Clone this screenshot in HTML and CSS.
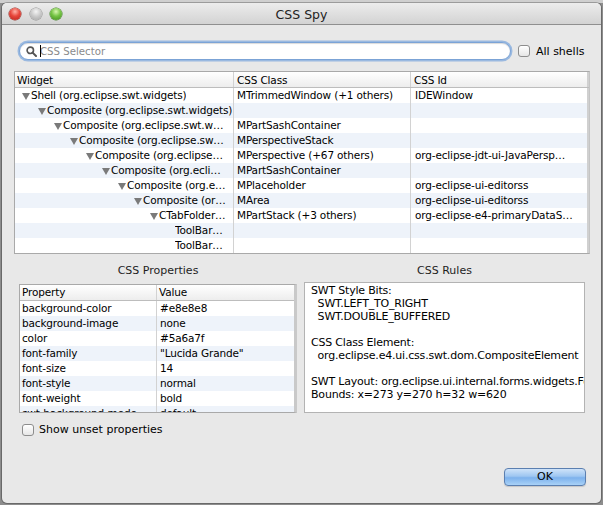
FILE: index.html
```html
<!DOCTYPE html>
<html>
<head>
<meta charset="utf-8">
<title>CSS Spy</title>
<link rel="stylesheet" href="styles.css">
</head>
<body>
<div class="window">
  <div class="titlebar">
    <div class="lights">
      <span class="light red"></span>
      <span class="light gray"></span>
      <span class="light green"></span>
    </div>
    <div class="title">CSS Spy</div>
    <div></div>
  </div>
  <div class="content">
    <div class="search-row">
      <div class="search">
        <svg class="mag" width="11" height="11" viewBox="0 0 11 11">
          <circle cx="4.3" cy="4.3" r="3.2" fill="none" stroke="#555" stroke-width="1.6"/>
          <path d="M6.6 6.6 L10 10" stroke="#555" stroke-width="2" stroke-linecap="round"/>
        </svg>
        <span class="caret"></span>
        <span class="placeholder">CSS Selector</span>
      </div>
      <div class="check"><span class="box"></span><span>All shells</span></div>
    </div>

    <div class="tree">
      <div class="thead">
        <div class="th">Widget</div>
        <div class="th">CSS Class</div>
        <div class="th last">CSS Id</div>
      </div>
      <div class="row">
        <div class="cell tcell l0"><span class="tri"></span><span class="txt">Shell (org.eclipse.swt.widgets)</span></div>
        <div class="cell">MTrimmedWindow (+1 others)</div>
        <div class="cell">IDEWindow</div>
      </div>
      <div class="row alt">
        <div class="cell tcell l1"><span class="tri"></span><span class="txt">Composite (org.eclipse.swt.widgets)</span></div>
        <div class="cell"></div>
        <div class="cell"></div>
      </div>
      <div class="row">
        <div class="cell tcell l2"><span class="tri"></span><span class="txt">Composite (org.eclipse.swt.w…</span></div>
        <div class="cell">MPartSashContainer</div>
        <div class="cell"></div>
      </div>
      <div class="row alt">
        <div class="cell tcell l3"><span class="tri"></span><span class="txt">Composite (org.eclipse.sw…</span></div>
        <div class="cell">MPerspectiveStack</div>
        <div class="cell"></div>
      </div>
      <div class="row">
        <div class="cell tcell l4"><span class="tri"></span><span class="txt">Composite (org.eclipse…</span></div>
        <div class="cell">MPerspective (+67 others)</div>
        <div class="cell">org-eclipse-jdt-ui-JavaPersp…</div>
      </div>
      <div class="row alt">
        <div class="cell tcell l5"><span class="tri"></span><span class="txt">Composite (org.ecli…</span></div>
        <div class="cell">MPartSashContainer</div>
        <div class="cell"></div>
      </div>
      <div class="row">
        <div class="cell tcell l6"><span class="tri"></span><span class="txt">Composite (org.e…</span></div>
        <div class="cell">MPlaceholder</div>
        <div class="cell">org-eclipse-ui-editorss</div>
      </div>
      <div class="row alt">
        <div class="cell tcell l7"><span class="tri"></span><span class="txt">Composite (or…</span></div>
        <div class="cell">MArea</div>
        <div class="cell">org-eclipse-ui-editorss</div>
      </div>
      <div class="row">
        <div class="cell tcell l8"><span class="tri"></span><span class="txt">CTabFolder…</span></div>
        <div class="cell">MPartStack (+3 others)</div>
        <div class="cell">org-eclipse-e4-primaryDataS…</div>
      </div>
      <div class="row alt">
        <div class="cell tcell l9"><span class="tri none"></span><span class="txt">ToolBar…</span></div>
        <div class="cell"></div>
        <div class="cell"></div>
      </div>
      <div class="row">
        <div class="cell tcell l9"><span class="tri none"></span><span class="txt">ToolBar…</span></div>
        <div class="cell"></div>
        <div class="cell"></div>
      </div>
    </div>

    <div class="lower">
      <div class="label">CSS Properties</div>
      <div class="label">CSS Rules</div>
      <div class="props">
        <div class="phead">
          <div class="th">Property</div>
          <div class="th last">Value</div>
        </div>
        <div class="prow"><div class="pc">background-color</div><div class="pc">#e8e8e8</div></div>
        <div class="prow alt"><div class="pc">background-image</div><div class="pc">none</div></div>
        <div class="prow"><div class="pc">color</div><div class="pc">#5a6a7f</div></div>
        <div class="prow alt"><div class="pc">font-family</div><div class="pc">"Lucida Grande"</div></div>
        <div class="prow"><div class="pc">font-size</div><div class="pc">14</div></div>
        <div class="prow alt"><div class="pc">font-style</div><div class="pc">normal</div></div>
        <div class="prow"><div class="pc">font-weight</div><div class="pc">bold</div></div>
        <div class="prow alt"><div class="pc">swt-background-mode</div><div class="pc">default</div></div>
      </div>
      <div class="rules"><pre class="rules-text">SWT Style Bits:
  SWT.LEFT_TO_RIGHT
  SWT.DOUBLE_BUFFERED

CSS Class Element:
  org.eclipse.e4.ui.css.swt.dom.CompositeElement

SWT Layout: org.eclipse.ui.internal.forms.widgets.FormLayout
Bounds: x=273 y=270 h=32 w=620</pre></div>
    </div>

    <div class="check unset"><span class="box"></span><span>Show unset properties</span></div>

    <div class="footer">
      <button class="ok">OK</button>
    </div>
  </div>
</div>
</body>
</html>
```
FILE: styles.css
```css
* { box-sizing: border-box; }

html, body {
  margin: 0;
  padding: 0;
}

body {
  width: 603px;
  height: 505px;
  overflow: hidden;
  background: linear-gradient(#cfcfcf 0, #cfcfcf 3px, #8d8d8d 3px);
  font-family: "DejaVu Sans", sans-serif;
  font-size: 11px;
  color: #000;
}

.window {
  margin: 3px 0 0 2px;
  width: 599px;
  height: 500px;
  background: #e8e8e8;
  border-radius: 5px;
  overflow: hidden;
  display: flex;
  flex-direction: column;
  box-shadow: 0 0 0 1px rgba(0,0,0,0.25);
}

/* title bar */
.titlebar {
  height: 22px;
  flex: none;
  display: grid;
  grid-template-columns: 1fr auto 1fr;
  align-items: center;
  background: linear-gradient(#ececec, #d3d3d3);
  border-bottom: 1px solid #8f8f8f;
}

.lights {
  display: flex;
  gap: 8.5px;
  padding-left: 7px;
}

.light {
  width: 12px;
  height: 12px;
  border-radius: 50%;
  display: block;
}

.light.red {
  background: radial-gradient(circle at 50% 30%, #ffb3a8 0, #e8473c 45%, #b8211a 100%);
  box-shadow: 0 0 0 0.5px #8d2a24;
}

.light.gray {
  background: radial-gradient(circle at 50% 30%, #f4f4f4 0, #c8c8c8 50%, #a5a5a5 100%);
  box-shadow: 0 0 0 0.5px #8a8a8a;
}

.light.green {
  background: radial-gradient(circle at 50% 30%, #d8f7b0 0, #74c343 45%, #3f8a1c 100%);
  box-shadow: 0 0 0 0.5px #3f7d25;
}

.title {
  font-size: 12.5px;
  color: #222;
  padding-top: 1px;
}

/* content */
.content {
  flex: 1;
  display: flex;
  flex-direction: column;
  padding: 16px 12px 17px 12px;
}

.search-row {
  height: 20px;
  display: flex;
  align-items: center;
}

.search {
  margin-left: 5px;
  width: 492px;
  height: 18px;
  background: #fff;
  border: 1px solid #7ba3d6;
  border-radius: 9px;
  box-shadow: 0 0 0 1.5px rgba(128, 170, 222, 0.75), inset 0 1px 1px rgba(0,0,0,0.15);
  display: flex;
  align-items: center;
  padding-left: 6px;
}

.mag {
  flex: none;
  margin-right: 3px;
}

.caret {
  width: 1px;
  height: 12px;
  background: #000;
  margin-right: -1px;
  position: relative;
  z-index: 1;
}

.placeholder {
  color: #8a8a8a;
  font-size: 10.2px;
}

.check {
  display: flex;
  align-items: center;
  gap: 6px;
  margin-left: 7px;
}

.box {
  width: 12px;
  height: 12px;
  border: 1px solid #8d8d8d;
  border-radius: 3px;
  background: linear-gradient(#ffffff, #e6e6e6);
  box-shadow: inset 0 1px 1px rgba(255,255,255,0.8);
  flex: none;
}

/* tree table */
.tree {
  margin-top: 10px;
  width: 576px;
  background: #fff;
  border: 1px solid #a9a9a9;
  border-right-color: #c4c4c4;
  font-size: 10.5px;
  letter-spacing: -0.15px;
}

.thead, .row {
  display: grid;
  grid-template-columns: 219px 177px 1fr;
}

.thead {
  height: 16px;
  background: linear-gradient(#ffffff, #ededed);
  border-bottom: 1px solid #bdbdbd;
}

.th {
  line-height: 16px;
  padding-left: 2px;
  border-right: 1px solid #d2d2d2;
  white-space: nowrap;
  overflow: hidden;
}

.thead .th + .th { padding-left: 3px; }

.th.last { border-right: 2px solid #d0d0d0; }

.row {
  height: 15px;
  background: #fff;
}

.row.alt { background: #eef3fa; }

.cell {
  line-height: 15px;
  padding-left: 3px;
  border-right: 1px solid #d2d2d2;
  white-space: nowrap;
  overflow: hidden;
  text-overflow: ellipsis;
}

.cell:last-child { padding-left: 4px; border-right: 2px solid #d0d0d0; }

.tcell {
  display: flex;
  align-items: center;
  padding-left: 7px;
}

.l1 { padding-left: 23px; }
.l2 { padding-left: 39px; }
.l3 { padding-left: 55px; }
.l4 { padding-left: 71px; }
.l5 { padding-left: 87px; }
.l6 { padding-left: 103px; }
.l7 { padding-left: 119px; }
.l8 { padding-left: 135px; }
.l9 { padding-left: 151px; }

.tri {
  flex: none;
  width: 0;
  height: 0;
  border-left: 4.5px solid transparent;
  border-right: 4.5px solid transparent;
  border-top: 7px solid #7a7a7a;
  margin-right: 1px;
  margin-top: 1px;
}

.tri.none { border-top-color: transparent; }

.txt {
  overflow: hidden;
  text-overflow: ellipsis;
  white-space: nowrap;
}

/* lower section */
.lower {
  display: grid;
  grid-template-columns: 278px 281px;
  column-gap: 7px;
  margin-left: 5px;
  align-items: start;
}

.label {
  text-align: center;
  line-height: 13px;
  margin-top: 10px;
  color: #1e1e1e;
}

.props {
  margin-top: 7px;
  height: 129px;
  background: #fff;
  border: 1px solid #a9a9a9;
  border-right: 3px solid #c9c9c9;
  overflow: hidden;
  font-size: 10.5px;
  letter-spacing: -0.15px;
}

.phead, .prow {
  display: grid;
  grid-template-columns: 137px 1fr;
}

.phead {
  height: 16px;
  background: linear-gradient(#ffffff, #ededed);
  border-bottom: 1px solid #bdbdbd;
}

.phead .th { line-height: 15px; padding-left: 2px; }
.phead .th.last { border-right: none; }

.prow {
  height: 15px;
  background: #fff;
}

.prow.alt { background: #eef3fa; }

.pc {
  line-height: 15px;
  padding-left: 2px;
  white-space: nowrap;
  overflow: hidden;
  border-right: 1px solid #d2d2d2;
}

.pc + .pc { border-right: none; padding-left: 3px; }

.rules {
  margin-top: 5px;
  height: 131px;
  background: #fff;
  border: 1px solid #b3b3b3;
  overflow: hidden;
}

.rules-text {
  margin: 0;
  padding: 1px 0 0 6px;
  font-family: "DejaVu Sans", sans-serif;
  font-size: 11px;
  line-height: 13px;
  white-space: pre;
  letter-spacing: -0.2px;
}

.check.unset {
  margin-top: 10px;
  margin-left: 8px;
  gap: 5px;
}

.footer {
  margin-top: auto;
  display: flex;
  justify-content: flex-end;
  padding-right: 3px;
}

.ok {
  width: 82px;
  height: 18px;
  border: 1px solid #5b7fb0;
  border-radius: 4px;
  background: linear-gradient(#cfe3f9 0%, #9ec6f1 45%, #7db1ec 55%, #a9d2f7 100%);
  font-family: "DejaVu Sans", sans-serif;
  font-size: 11px;
  color: #000;
  padding: 0;
  line-height: 16px;
  box-shadow: 0 1px 1px rgba(0,0,0,0.15);
}
```
